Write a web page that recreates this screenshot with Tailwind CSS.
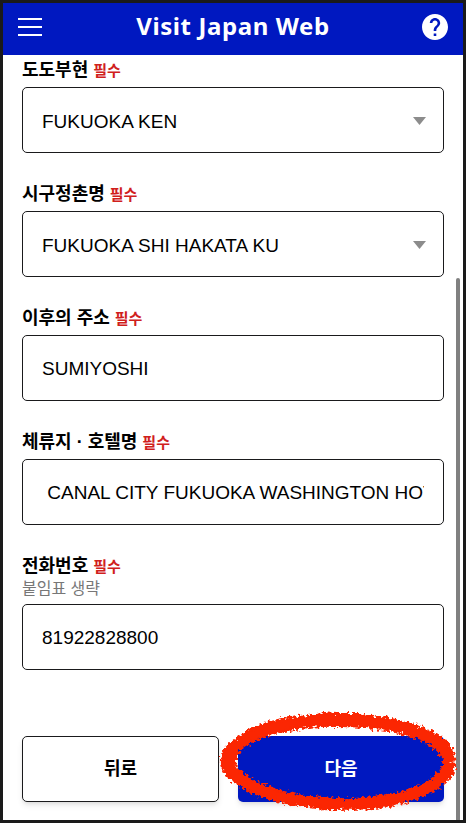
<!DOCTYPE html>
<html lang="ko">

<head>
    <meta charset="UTF-8">
    <meta name="viewport" content="width=device-width, initial-scale=1.0">
    <title>Visit Japan Web</title>
    <!-- Tailwind CSS -->
    <script src="https://cdn.jsdelivr.net/npm/@tailwindcss/browser@4"></script>
</head>

<body class="relative min-h-screen border-3 border-[#1a1a1a] bg-white text-black font-['Liberation_Sans','Noto_Sans_CJK_KR',sans-serif]">
    <!-- Header -->
    <header class="flex h-[52px] items-center justify-between bg-[#0018c0] px-[15px] pb-1 text-white">
        <button type="button" aria-label="메뉴" class="w-[26px]">
            <svg class="h-5 w-6" viewBox="0 0 24 20" stroke="currentColor" stroke-width="2">
                <path d="M0 2h24M0 10h24M0 18h24" />
            </svg>
        </button>
        <h1 class="pb-0.5 font-['Noto_Sans','Open_Sans',sans-serif] text-2xl font-bold tracking-wide">Visit Japan Web</h1>
        <button type="button" aria-label="도움말">
            <svg class="size-[26px]" viewBox="2 2 20 20" fill="currentColor">
                <path d="M12 2C6.48 2 2 6.48 2 12s4.48 10 10 10 10-4.48 10-10S17.52 2 12 2zm1 17h-2v-2h2v2zm2.07-7.75l-.9.92C13.45 12.9 13 13.5 13 15h-2v-.5c0-1.1.45-2.1 1.17-2.83l1.24-1.26c.37-.36.59-.86.59-1.41 0-1.1-.9-2-2-2s-2 .9-2 2H8c0-2.21 1.79-4 4-4s4 1.79 4 4c0 .88-.36 1.68-.93 2.25z" />
            </svg>
        </button>
    </header>

    <!-- Address form -->
    <form class="px-[19px] pt-[3px] pb-[18px]">
        <div class="flex flex-col gap-[29px]">
            <div>
                <label for="prefecture" class="mb-[5px] block h-6 text-lg leading-6 font-bold">도도부현 <span class="text-[15px] text-[#d0201c]">필수</span></label>
                <div class="relative">
                    <select id="prefecture" class="h-[66px] w-full appearance-none rounded-[5px] border border-[#1a1a1c] bg-white px-[19px] pt-1 text-[19px]">
                        <option>FUKUOKA KEN</option>
                    </select>
                    <svg class="pointer-events-none absolute top-[30px] right-[18px] h-[8px] w-[13px]" viewBox="0 0 13 8" fill="#8c8c8c">
                        <path d="M0 0h13L6.5 8z" />
                    </svg>
                </div>
            </div>

            <div>
                <label for="city" class="mb-[5px] block h-6 text-lg leading-6 font-bold">시구정촌명 <span class="text-[15px] text-[#d0201c]">필수</span></label>
                <div class="relative">
                    <select id="city" class="h-[66px] w-full appearance-none rounded-[5px] border border-[#1a1a1c] bg-white px-[19px] pt-1 text-[19px]">
                        <option>FUKUOKA SHI HAKATA KU</option>
                    </select>
                    <svg class="pointer-events-none absolute top-[30px] right-[18px] h-[8px] w-[13px]" viewBox="0 0 13 8" fill="#8c8c8c">
                        <path d="M0 0h13L6.5 8z" />
                    </svg>
                </div>
            </div>

            <div>
                <label for="address" class="mb-[5px] block h-6 text-lg leading-6 font-bold">이후의 주소 <span class="text-[15px] text-[#d0201c]">필수</span></label>
                <input type="text" id="address" value="SUMIYOSHI" class="block h-[66px] w-full rounded-[5px] border border-[#1a1a1c] px-[19px] pt-0.5 text-[19px]">
            </div>

            <div>
                <label for="hotel" class="mb-[5px] block h-6 text-lg leading-6 font-bold">체류지 · 호텔명 <span class="text-[15px] text-[#d0201c]">필수</span></label>
                <input type="text" id="hotel" value=" CANAL CITY FUKUOKA WASHINGTON HOTEL" class="block h-[66px] w-full rounded-[5px] border border-[#1a1a1c] px-[19px] pt-0.5 text-[19px]">
            </div>

            <div>
                <label for="phone" class="block h-6 text-lg leading-6 font-bold">전화번호 <span class="text-[15px] text-[#d0201c]">필수</span></label>
                <p id="phone-hint" class="mb-[5px] text-base leading-[21px] text-[#777777]">붙임표 생략</p>
                <input type="tel" id="phone" value="81922828800" aria-describedby="phone-hint" class="block h-[66px] w-full rounded-[5px] border border-[#1a1a1c] px-[19px] pt-0.5 text-[19px]">
            </div>
        </div>

        <div class="mt-[66px] grid grid-cols-[197fr_206fr] gap-[19px]">
            <button type="button" class="h-[66px] rounded-[5px] border border-[#1a1a1c] bg-white text-lg font-bold shadow-md">뒤로</button>
            <div class="relative">
                <button type="submit" class="h-[66px] w-full rounded-[5px] bg-[#0018c0] text-lg font-bold text-white shadow-md">다음</button>
                <!-- Crayon ring round the next button -->
                <svg class="pointer-events-none absolute -top-6 -left-[18px] z-10 h-[98px] w-[235px] overflow-visible" viewBox="21 36 705 294" preserveAspectRatio="none" fill="#fb2602" stroke="#fb2602" stroke-width="6" aria-hidden="true">
                    <filter id="crayon" x="-5%" y="-10%" width="110%" height="120%" color-interpolation-filters="sRGB">
                        <feTurbulence type="fractalNoise" baseFrequency="0.11" numOctaves="2" seed="4" />
                        <feDisplacementMap in="SourceGraphic" scale="26" xChannelSelector="R" yChannelSelector="G" />
                    </filter>
                    <path filter="url(#crayon)" fill-rule="evenodd" d="M24 180C28 152 40 138 62 124C84 104 104 92 132 80C160 68 190 60 222 55L308 46L318 41C340 40 360 40 380 42L440 42L482 51L535 58L584 70C614 78 640 88 664 102C694 118 710 130 716 150C724 162 726 172 724 182L700 186L724 192C724 208 720 220 710 232C692 252 670 268 640 282C610 296 576 308 540 315C496 324 448 328 400 326L330 328L322 322L260 316C220 312 184 302 150 290C120 280 92 266 70 250C50 238 38 226 34 212C26 202 22 192 24 180ZM66 182C68 166 78 150 96 138C114 126 136 116 162 106C188 98 218 90 250 86C290 80 330 76 370 78C416 78 460 80 500 86C536 92 572 100 604 112C632 122 656 134 672 150C684 162 692 174 692 188C690 204 684 216 670 226C650 244 626 258 600 266C568 278 534 284 500 288C466 294 434 298 400 298C360 298 320 294 280 288C244 284 210 278 182 266C152 258 126 246 106 234C82 220 66 204 66 182Z" />
                </svg>
            </div>
        </div>
    </form>

    <!-- Scroll bar thumb -->
    <div class="absolute top-[275px] right-[3px] bottom-0 w-1 rounded-t-full bg-[#808080]"></div>
</body>

</html>
